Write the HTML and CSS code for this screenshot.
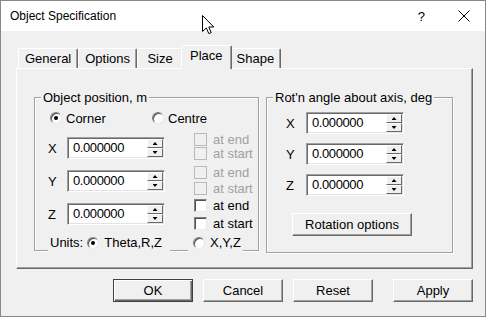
FILE: index.html
```html
<!DOCTYPE html>
<html lang="en">
<head>
  <meta charset="UTF-8">
  <title>Object Specification</title>
  <link rel="stylesheet" href="styles.css">
</head>
<body>
  <div class="window">
    <div class="titlebar">
      <span class="title">Object Specification</span>
      <span class="help">?</span>
      <svg class="close" width="12" height="12" viewBox="0 0 12 12">
        <path d="M0.5 0.5 L11.5 11.5 M11.5 0.5 L0.5 11.5" stroke="#000" stroke-width="1"/>
      </svg>
    </div>

    <div class="client">
      <div class="tabs">
        <div class="tab">General</div>
        <div class="tab">Options</div>
        <div class="tab">Size</div>
        <div class="tab active">Place</div>
        <div class="tab">Shape</div>
      </div>

      <div class="panel">
        <!-- Position group -->
        <fieldset class="group group-pos">
          <legend>Object position, m</legend>
          <div class="radio-row">
            <label class="option corner"><span class="radio checked"></span>Corner</label>
            <label class="option"><span class="radio"></span>Centre</label>
          </div>
          <div class="coord-row">
            <span class="axis">X</span>
            <div class="spin-edit"><span class="value">0.000000</span><div class="spinner"><span class="up"></span><span class="down"></span></div></div>
            <div class="checks">
              <label class="check disabled"><span class="box"></span>at end</label>
              <label class="check disabled"><span class="box"></span>at start</label>
            </div>
          </div>
          <div class="coord-row">
            <span class="axis">Y</span>
            <div class="spin-edit"><span class="value">0.000000</span><div class="spinner"><span class="up"></span><span class="down"></span></div></div>
            <div class="checks">
              <label class="check disabled"><span class="box"></span>at end</label>
              <label class="check disabled"><span class="box"></span>at start</label>
            </div>
          </div>
          <div class="coord-row">
            <span class="axis">Z</span>
            <div class="spin-edit"><span class="value">0.000000</span><div class="spinner"><span class="up"></span><span class="down"></span></div></div>
            <div class="checks">
              <label class="check"><span class="box"></span>at end</label>
              <label class="check"><span class="box"></span>at start</label>
            </div>
          </div>
          <div class="units-row">
            <span class="units-left">Units:<span class="radio checked"></span>Theta,R,Z</span>
            <span class="units-right"><span class="radio"></span>X,Y,Z</span>
          </div>
        </fieldset>

        <!-- Rotation group -->
        <fieldset class="group group-rot">
          <legend>Rot'n angle about axis, deg</legend>
          <div class="rot-row">
            <span class="axis">X</span>
            <div class="spin-edit"><span class="value">0.000000</span><div class="spinner"><span class="up"></span><span class="down"></span></div></div>
          </div>
          <div class="rot-row">
            <span class="axis">Y</span>
            <div class="spin-edit"><span class="value">0.000000</span><div class="spinner"><span class="up"></span><span class="down"></span></div></div>
          </div>
          <div class="rot-row">
            <span class="axis">Z</span>
            <div class="spin-edit"><span class="value">0.000000</span><div class="spinner"><span class="up"></span><span class="down"></span></div></div>
          </div>
          <button class="btn rot-btn">Rotation options</button>
        </fieldset>
      </div>

      <div class="buttons">
        <button class="btn default">OK</button>
        <button class="btn">Cancel</button>
        <button class="btn">Reset</button>
        <button class="btn apply">Apply</button>
      </div>
    </div>

    <svg class="cursor" width="13" height="20" viewBox="0 0 13 20">
      <path d="M0.5 0.5 L0.5 16.5 L4.3 12.9 L6.8 18.6 L9.2 17.6 L6.8 12 L11.8 12 Z" fill="#fff" stroke="#000" stroke-width="1" stroke-linejoin="miter"/>
    </svg>
  </div>
</body>
</html>
```

FILE: styles.css
```css
/* General */
body {
  margin: 0;
  background: #fff;
  font-family: "Liberation Sans", Arial, sans-serif;
  font-size: 13px;
  color: #000;
}

.window {
  position: relative;
  width: 486px;
  height: 317px;
  box-sizing: border-box;
  border: 1px solid #888;
  background: #f0f0f0;
  display: flex;
  flex-direction: column;
}

/* Title bar */
.titlebar {
  height: 30px;
  flex-shrink: 0;
  background: #fff;
  display: flex;
  align-items: center;
  padding-left: 9px;
}

.title {
  font-size: 12px;
}

.help {
  margin-left: auto;
  margin-right: 33px;
  font-size: 13px;
}

.close {
  margin-right: 15px;
}

.cursor {
  position: absolute;
  left: 201px;
  top: 14px;
}

/* Client area */
.client {
  padding: 14px 0 0 15px;
}

.tabs {
  display: flex;
  align-items: flex-end;
  height: 23px;
  padding-left: 2px;
}

.tab {
  box-sizing: border-box;
  height: 20px;
  line-height: 19px;
  min-width: 46px;
  padding: 0 6px;
  text-align: center;
  border-top: 1px solid #fff;
  border-left: 1px solid #fff;
  border-right: 1px solid #696969;
  border-radius: 2px 2px 0 0;
  box-shadow: inset -1px 0 0 #a0a0a0;
}

.tab.active {
  position: relative;
  z-index: 1;
  height: 24px;
  line-height: 20px;
  margin: 0 -2px -1px;
  padding: 0 8px;
  background: #f0f0f0;
}

.panel {
  box-sizing: border-box;
  width: 457px;
  height: 201px;
  border: 1px solid;
  border-color: #fff #696969 #696969 #fff;
  box-shadow: inset -1px -1px 0 #a0a0a0;
  display: flex;
  align-items: flex-start;
  gap: 7px;
  padding: 21px 0 0 17px;
}

/* Group boxes */
.group {
  box-sizing: border-box;
  margin: 0;
  padding: 0;
  min-width: 0;
  border: 1px solid #a0a0a0;
  box-shadow: inset 1px 1px 0 #fff, 1px 1px 0 #fff;
}

.group legend {
  margin-left: 6px;
  padding: 0 2px;
  line-height: 15px;
  background: #f0f0f0;
}

.group-pos {
  width: 225px;
  height: 161px;
}

.group-rot {
  width: 187px;
  height: 163px;
}

/* Radio buttons and checkboxes */
.radio {
  display: inline-block;
  box-sizing: border-box;
  width: 12px;
  height: 12px;
  border-radius: 50%;
  border: 1px solid;
  border-color: #808080 #e8e8e8 #e8e8e8 #808080;
  box-shadow: inset 1px 1px 0 #505050;
  background: #fff;
  position: relative;
  flex-shrink: 0;
}

.radio.checked:after {
  content: '';
  position: absolute;
  left: 3px;
  top: 3px;
  width: 4px;
  height: 4px;
  border-radius: 50%;
  background: #000;
}

.radio-row {
  display: flex;
  align-items: center;
  height: 22px;
  margin-top: 2px;
  padding-left: 15px;
}

.option {
  display: flex;
  align-items: center;
  gap: 4px;
}

.option.corner {
  width: 102px;
}

.coord-row {
  display: flex;
  align-items: flex-start;
  height: 33px;
  padding-left: 13px;
}

.coord-row:nth-of-type(2) {
  margin-top: 1px;
}

.axis {
  width: 19px;
  line-height: 22px;
  margin-top: 8px;
}

.coord-row .spin-edit {
  margin-top: 7px;
  margin-right: 29px;
}

.checks {
  display: flex;
  flex-direction: column;
  gap: 1px;
  margin-top: 3px;
}

.coord-row:nth-of-type(3) .checks {
  gap: 3px;
}

.coord-row:nth-of-type(4) .checks {
  gap: 5px;
}

.check {
  display: flex;
  align-items: center;
  gap: 6px;
  height: 13px;
  line-height: 13px;
}

.box {
  box-sizing: border-box;
  width: 13px;
  height: 13px;
  border: 1px solid;
  border-color: #808080 #e8e8e8 #e8e8e8 #808080;
  box-shadow: inset 1px 1px 0 #505050;
  background: #fff;
}

.check.disabled {
  color: #a0a0a0;
}

.check.disabled .box {
  border-color: #b9b9b9;
  box-shadow: none;
  background: #f0f0f0;
}

.units-row {
  display: flex;
  margin-top: 6px;
  height: 17px;
  line-height: 15px;
}

.units-left,
.units-right {
  display: flex;
  align-items: center;
  box-sizing: border-box;
  height: 17px;
  padding-bottom: 2px;
  background: #f0f0f0;
}

.units-left {
  width: 122px;
  margin-left: 13px;
  padding-left: 2px;
}

.units-left .radio {
  margin: 0 5px 0 4px;
}

.units-right {
  width: 55px;
  margin-left: 18px;
  padding-left: 5px;
}

.units-right .radio {
  margin-right: 5px;
}

/* Spin edits */
.spin-edit {
  box-sizing: border-box;
  width: 98px;
  height: 22px;
  padding: 1px;
  display: flex;
  border: 1px solid;
  border-color: #a0a0a0 #fff #fff #a0a0a0;
  box-shadow: inset 1px 1px 0 #696969, inset -1px -1px 0 #e3e3e3;
  background: #fff;
}

.value {
  padding-left: 4px;
  line-height: 18px;
  letter-spacing: -0.4px;
}

.spinner {
  margin-left: auto;
  width: 16px;
  display: flex;
  flex-direction: column;
}

.spinner span {
  flex: 1;
  box-sizing: border-box;
  border: 1px solid;
  border-color: #fff #696969 #696969 #fff;
  background: #f0f0f0;
  display: flex;
  align-items: center;
  justify-content: center;
}

.spinner span:after {
  content: '';
  width: 5px;
  height: 3px;
  background: #000;
}

.spinner .up:after {
  clip-path: polygon(50% 0, 100% 100%, 0 100%);
}

.spinner .down:after {
  clip-path: polygon(0 0, 100% 0, 50% 100%);
}

/* Rotation group */
.rot-row {
  display: flex;
  align-items: flex-start;
  height: 31px;
  padding-left: 19px;
}

.rot-row:nth-of-type(1) {
  margin-top: 7px;
}

.rot-row .axis {
  width: 20px;
  margin-top: 1px;
}

/* Buttons */
.btn {
  box-sizing: border-box;
  width: 80px;
  height: 23px;
  padding: 0;
  font-family: inherit;
  font-size: 13px;
  color: #000;
  background: #f0f0f0;
  border: 1px solid;
  border-color: #fff #696969 #696969 #fff;
  box-shadow: inset -1px -1px 0 #a0a0a0;
}

.btn.default {
  border-color: #404040;
  box-shadow: inset 1px 1px 0 #fff, inset -1px -1px 0 #696969, inset -2px -2px 0 #a0a0a0;
}

.rot-btn {
  width: 120px;
  margin: 8px 0 0 25px;
}

.buttons {
  display: flex;
  justify-content: flex-end;
  gap: 10px;
  width: 457px;
  margin-top: 10px;
}

.btn.apply {
  margin-left: 10px;
}
```
